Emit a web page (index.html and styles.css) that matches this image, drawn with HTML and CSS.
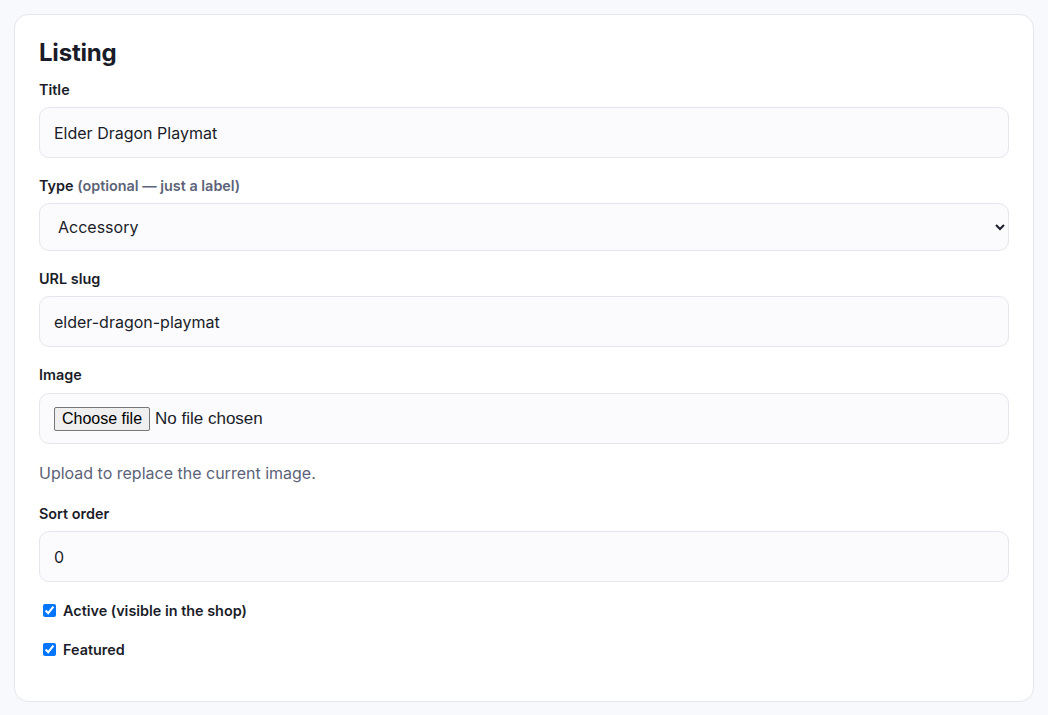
FILE: index.html
```html
<!DOCTYPE html>
<html lang="en">
<head>
    <meta charset="UTF-8">
    <title>Edit listing</title>
    <link rel="stylesheet" href="styles.css">
</head>
<body>
	<form class="card">
		<h2 class="card-title">Listing</h2>

		<div class="field">
			<label class="field-label" for="title">Title</label>
			<input class="field-input" id="title" type="text" value="Elder Dragon Playmat">
		</div>

		<div class="field">
			<label class="field-label" for="type">Type <span class="hint">(optional — just a label)</span></label>
			<select class="field-input field-select" id="type">
				<option>Accessory</option>
				<option>Card</option>
				<option>Sealed</option>
			</select>
		</div>

		<div class="field">
			<label class="field-label" for="slug">URL slug</label>
			<input class="field-input" id="slug" type="text" value="elder-dragon-playmat">
		</div>

		<div class="field">
			<label class="field-label" for="image">Image</label>
			<div class="field-input field-file">
				<input class="file-real" id="image" type="file">
				<label class="file-btn" for="image">Choose file</label>
				<span class="file-name">No file chosen</span>
			</div>
			<p class="help">Upload to replace the current image.</p>
		</div>

		<div class="field">
			<label class="field-label" for="sort">Sort order</label>
			<input class="field-input" id="sort" type="text" value="0">
		</div>

		<label class="check"><input type="checkbox" checked> Active (visible in the shop)</label>
		<label class="check"><input type="checkbox" checked> Featured</label>
	</form>
</body>
</html>
```

FILE: styles.css
```css
body{
	margin: 0;
	padding: 14px;
	background: #f8f9fc;
	font-family: Inter, "Noto Sans", sans-serif;
	color: #1a1d29;
}
.card{
	display: flex;
	flex-direction: column;
	padding: 20px 24px 23px;
	background: #fff;
	border: 1px solid #e4e6ee;
	border-radius: 14px;
}
.card-title{
	margin: 0 0 9px;
	font-size: 24px;
	line-height: 36px;
	font-weight: 700;
	letter-spacing: -0.2px;
}
.field{
	display: flex;
	flex-direction: column;
	margin-bottom: 18px;
}
.field-label{
	font-size: 14.4px;
	line-height: 20px;
	font-weight: 600;
	margin-bottom: 7px;
}
.hint{
	color: #5c6378;
	font-weight: 600;
}
.field-input{
	box-sizing: border-box;
	height: 51px;
	padding: 0 14px;
	background: #fbfbfd;
	border: 1px solid #e4e6ee;
	border-radius: 10px;
	font-family: Inter, "Noto Sans", sans-serif;
	font-size: 16px;
	color: #1a1d29;
	outline: none;
}
.field-select{
	height: 48px;
	padding: 0 10px 0 14px;
}

/* file picker: native input hidden, label drawn as the button */
.field-file{
	display: flex;
	align-items: center;
	margin-top: 1px;
	font-family: "Liberation Sans", Arial, sans-serif;
}
.file-real{
	position: absolute;
	width: 1px;
	height: 1px;
	opacity: 0;
}
.file-btn{
	padding: 1px 7px;
	background: #efefef;
	border: 1px solid #767676;
	border-radius: 2px;
	font-size: 16px;
	line-height: 20px;
	color: #000;
}
.file-name{
	margin-left: 5px;
	font-size: 17px;
	color: #1a1d29;
}
.help{
	margin: 17px 0 1px;
	font-size: 16px;
	line-height: 24px;
	color: #5c6378;
}
.check{
	display: flex;
	align-items: center;
	gap: 4px;
	height: 20px;
	margin-bottom: 19px;
	font-size: 14.4px;
	font-weight: 600;
}
.check input{
	margin: 0 3px 0 4px;
	width: 13px;
	height: 13px;
}
```
